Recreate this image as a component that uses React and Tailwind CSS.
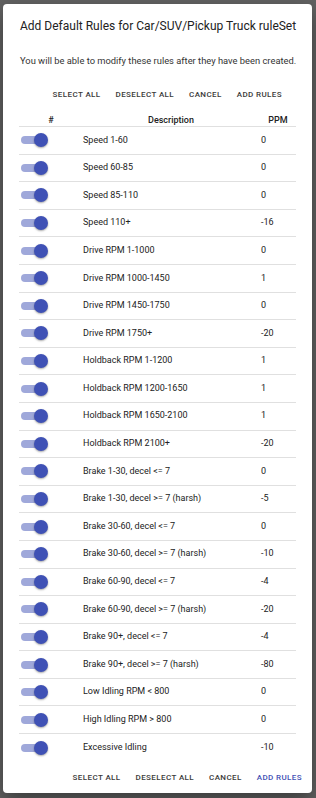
import React from 'react';

const rules = [
  ['Speed 1-60', '0'],
  ['Speed 60-85', '0'],
  ['Speed 85-110', '0'],
  ['Speed 110+', '-16'],
  ['Drive RPM 1-1000', '0'],
  ['Drive RPM 1000-1450', '1'],
  ['Drive RPM 1450-1750', '0'],
  ['Drive RPM 1750+', '-20'],
  ['Holdback RPM 1-1200', '1'],
  ['Holdback RPM 1200-1650', '1'],
  ['Holdback RPM 1650-2100', '1'],
  ['Holdback RPM 2100+', '-20'],
  ['Brake 1-30, decel <= 7', '0'],
  ['Brake 1-30, decel >= 7 (harsh)', '-5'],
  ['Brake 30-60, decel <= 7', '0'],
  ['Brake 30-60, decel >= 7 (harsh)', '-10'],
  ['Brake 60-90, decel <= 7', '-4'],
  ['Brake 60-90, decel >= 7 (harsh)', '-20'],
  ['Brake 90+, decel <= 7', '-4'],
  ['Brake 90+, decel >= 7 (harsh)', '-80'],
  ['Low Idling RPM < 800', '0'],
  ['High Idling RPM > 800', '0'],
  ['Excessive Idling', '-10'],
];

const Toggle = () => (
  <div className="relative h-[14px] w-[27px] ml-[2px]">
    <div className="absolute left-0 top-[3px] h-[8px] w-[22px] rounded-full bg-[#9fa8da]" />
    <div className="absolute left-[13px] top-0 h-[14px] w-[14px] rounded-full bg-[#3f51b5] shadow-[0_1px_2px_rgba(0,0,0,0.35)]" />
  </div>
);

const ActionBar = ({ primary }) => (
  <div className="flex justify-end gap-[15px] whitespace-nowrap text-[8px] font-medium uppercase leading-[10px] tracking-[0.4px] text-[#3a3a3a]">
    <span>Select All</span>
    <span>Deselect All</span>
    <span>Cancel</span>
    <span className={primary ? 'text-[#3f51b5]' : ''}>Add Rules</span>
  </div>
);

export default function App() {
  return (
    <div
      className="h-[798px] w-[316px] overflow-hidden bg-[#626262] pt-[4px] pl-[3px]"
      style={{ fontFamily: 'Roboto, "Liberation Sans", sans-serif' }}
    >
      <div className="h-[789px] w-[309px] rounded-[4px] bg-white shadow-[0_8px_20px_rgba(0,0,0,0.4)] flex flex-col">
        <h2 className="whitespace-nowrap pl-[17px] pt-[14px] text-[12px] font-normal leading-[16px] text-[#222]">
          Add Default Rules for Car/SUV/Pickup Truck ruleSet
        </h2>
        <p className="whitespace-nowrap pl-[17px] pt-[21px] text-[9.35px] leading-[12px] text-[#333]">
          You will be able to modify these rules after they have been created.
        </p>
        <div className="pt-[23px] pr-[30px]">
          <ActionBar />
        </div>

        <div className="mx-[16px] mt-[14px]">
          <div className="grid grid-cols-[64px_176px_38px] border-b border-[#e0e0e0] text-[9px] font-medium leading-[12px] text-[#222]">
            <span className="text-center">#</span>
            <span className="text-center">Description</span>
            <span className="text-center">PPM</span>
          </div>
          {rules.map(([desc, ppm], i) => (
            <div
              key={desc}
              className={`grid h-[27.6px] grid-cols-[64px_176px_38px] items-center text-[9px] text-[#222] ${
                i < rules.length - 1 ? 'border-b border-[#e0e0e0]' : ''
              }`}
            >
              <Toggle />
              <span>{desc}</span>
              <span className="pl-[2px]">{ppm}</span>
            </div>
          ))}
        </div>

        <div className="pt-[11px] pr-[10px]">
          <ActionBar primary />
        </div>
      </div>
    </div>
  );
}
